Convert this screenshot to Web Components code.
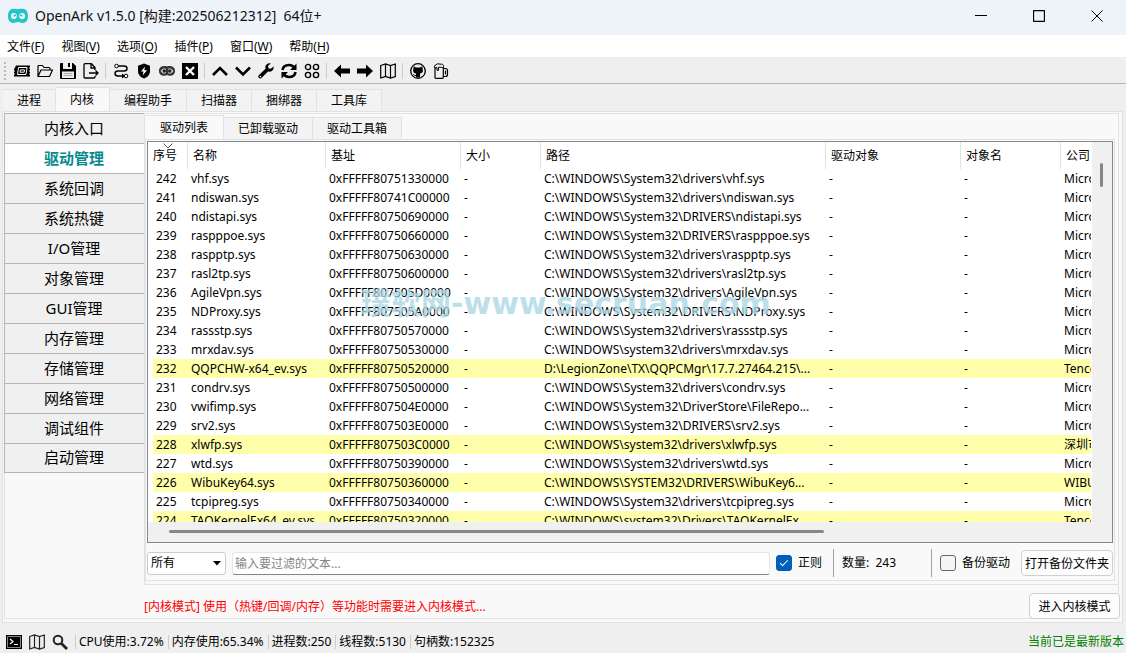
<!DOCTYPE html>
<html lang="zh-CN">
<head>
<meta charset="utf-8">
<title>OpenArk v1.5.0</title>
<style>
  html, body {
    height: 100%;
    margin: 0;
  }
  body {
    font: 12px/16px "Noto Sans", "Noto Sans CJK SC", sans-serif;
    color: #000;
    background: #efefef;
    --line: #e2e2e2;
    --pane: #f9f9f9;
    --chrome: #efefef;
    --frame: #828790;
  }
</style>
</head>
<body>
<ark-window></ark-window>

<script>
const ICONS = {
  logo: '<path fill="#22c5c8" d="M8 2.500c1.500 0 2-.5 4-.3C14.800 2.600 16 5 16 8s-1.200 5.200-4 5.600c-1.500.2-2-.8-4-.8s-2.500 1-4 .8C1.200 13.200 0 11 0 8s1.200-5.400 4-5.800c2-.2 2.500.3 4 .3z"/><ellipse cx="4.700" cy="8" rx="2.300" ry="2.400" fill="#fff"/><ellipse cx="11.300" cy="8" rx="2.300" ry="2.400" fill="#fff"/><path d="M4.700 8.200l1.500-1.200M11.300 8.200L9.800 7" stroke="#22c5c8" stroke-width="1.500"/>',
  chip: '<path fill="currentColor" d="M2 2.500h14v2h-1v1h1v2h-1v1h1v2h-1v1h1v2H0v-2h1v-1H0v-2h1v-1H0v-2h1v-1H1z"/><path d="M4.500 4.500h8.500l-1 7H3.500z" fill="none" stroke="#fff"/><path d="M6.500 6.900h4l-.4 2.300H6z" fill="none" stroke="#fff"/>',
  folder: '<path d="M1 13.500V3.500q0-1 1-1h3.500l1.500 2h5q1 0 1 1V7M1 13.500L4 7h11.500l-3 6.500z" fill="none" stroke="currentColor" stroke-width="1.200" stroke-linejoin="round"/>',
  save: '<path fill="currentColor" fill-rule="evenodd" d="M1 0h12l3 3v12q0 1-1 1H1q-1 0-1-1V1q0-1 1-1zm2 0v6h9V0h-2v4H8V0zM2 8.500V15h12V8.500z"/><path d="M3.500 10.500h9M3.500 12.500h9" stroke="#aaa"/>',
  exportFile: '<path d="M12 7V4.500L8.500.700H2q-1 0-1 1V14q0 1 1 1h9q1 0 1-1v-1M8 1v4h4M6 10h9M12.500 7.500L15 10l-2.500 2.500" fill="none" stroke="currentColor" stroke-width="1.300"/>',
  route: '<path d="M5 3h6q3 0 3 2.500T11 8H5q-3 0-3 2.500T5 13h5" fill="none" stroke="currentColor" stroke-width="1.500"/><circle cx="3.500" cy="3" r="1.800" fill="#fff" stroke="currentColor"/><path d="M9 10.500l3.500 2.500L9 15.500z" fill="currentColor"/><circle cx="13" cy="13" r="1.800" fill="#fff" stroke="currentColor"/>',
  shield: '<path fill="currentColor" d="M8 .500l6 2.300V8c0 4-3 6.500-6 7.500C5 14.500 2 12 2 8V2.800z"/><path fill="#fff" d="M9 3.500L5 8.500h2.500l-.8 4L11 7.300H8.300z"/>',
  mask: '<path fill="#333" d="M8 3.500c2-.8 8-.8 8 4.500s-6 5.300-8 4c-2 1.300-8 1.300-8-4s6-5.300 8-4.500z"/><path d="M1.500 8q3-4 5.500-2v4q-3 2-5.500-2zM14.500 8q-3-4-5.500-2v4q3 2 5.500-2z" fill="#ccc"/><circle cx="5.300" cy="8" r="1.700" fill="#222"/><circle cx="10.700" cy="8" r="1.700" fill="#222"/>',
  closeBox: '<path fill="currentColor" d="M0 0h16v16H0z"/><path d="M4 4l8 8M12 4l-8 8" stroke="#fff" stroke-width="2.400"/>',
  up: '<path d="M1 12l7-7 7 7" fill="none" stroke="currentColor" stroke-width="2.600"/>',
  down: '<path d="M1 4.500l7 7 7-7" fill="none" stroke="currentColor" stroke-width="2.600"/>',
  wrench: '<path fill="currentColor" d="M15.600 3.600l-2.900 2.200-2.300-.6-.4-2.200L12.700.400C10.500-.300 7.500 1 7.300 4l.2 1.700L.800 12.200c-1.600 1.700.8 4.300 2.700 2.800L10 8.500c3.200.8 6.200-1.500 5.600-4.900z"/><circle cx="2.500" cy="13.500" r=".8" fill="#fff"/>',
  refresh: '<path d="M1.500 7C2 3.500 5 2 8 2c2.500 0 4 1 5.500 2.800M14.500 9c-.5 3.500-3.500 5-6.500 5-2.500 0-4-1-5.500-2.800" fill="none" stroke="currentColor" stroke-width="2.600"/><path fill="currentColor" d="M15.500.500V7H9zM.500 15.500V9H7z"/>',
  grid: '<g fill="none" stroke="currentColor" stroke-width="1.400"><circle cx="4" cy="4" r="2.600"/><circle cx="12" cy="4" r="2.600"/><circle cx="4" cy="12" r="2.600"/><circle cx="12" cy="12" r="2.600"/></g>',
  left: '<path fill="currentColor" d="M0 8l7-6.500V5.500h9v5H7v4z"/>',
  right: '<path fill="currentColor" d="M16 8L9 1.500V5.500H0v5h9v4z"/>',
  map: '<path d="M.700 2.500L5.500 1l5 1.500L15.300 1v12.500L10.500 15l-5-1.500L.700 15zM5.500 1v12.500M10.500 2.500V15" fill="none" stroke="currentColor" stroke-width="1.200"/>',
  github: '<circle cx="8" cy="8" r="7.300" fill="none" stroke="currentColor" stroke-width="1.300"/><path fill="currentColor" d="M3.700 3.300l2.200 1.200h4.200l2.200-1.200.6 4.200c0 2-1.400 2.800-2.900 3.100v4H6v-4c-1.500-.3-2.900-1.100-2.900-3.100z"/><path d="M6 12.500c-1.500.3-2-.5-2.800-1.300" fill="none" stroke="currentColor"/>',
  beer: '<path d="M2 4v10.500q0 .8.800.8h6.700q.8 0 .8-.8V4M10.500 5.500h2q2 0 2 2v4q0 2-2 2h-2M12.500 7.500v4" fill="none" stroke="currentColor" stroke-width="1.200"/><path d="M2 5C.700 4 1.500 2 3 2 3.500.500 6 .500 7 1.300c1.700-.8 4 .2 3.500 2.300-.5 1-1.500 1-2.500.7H5.500v3H4V4.500z" fill="#eee" stroke="currentColor"/>',
  terminal: '<path fill="#000" d="M0 1h16v14H0z"/><path d="M1.500 2.500h13v11h-13z" fill="none" stroke="#888"/><path d="M4 5l3 2.500L4 10M8 10.500h4" fill="none" stroke="#fff" stroke-width="1.200"/>',
  search: '<circle cx="6" cy="6" r="4.300" fill="none" stroke="currentColor" stroke-width="2"/><path d="M9.200 9.200L15 15" stroke="currentColor" stroke-width="2.800"/>'
}

const TOOLS = [
  ['chip', 'folder', 'save', 'exportFile'],
  ['route', 'shield', 'mask', 'closeBox'],
  ['up', 'down', 'wrench', 'refresh', 'grid'],
  ['left', 'right', 'map'],
  ['github', 'beer']
]

const SYS = 'C:\\WINDOWS\\System32\\'
const sys = 'C:\\WINDOWS\\system32\\'
const MS = 'Microsoft'

// number, name, base, path, company, flagged
const DRIVERS = [
  [242, 'vhf.sys', '51330000', SYS + 'drivers\\vhf.sys', MS],
  [241, 'ndiswan.sys', '41C00000', SYS + 'drivers\\ndiswan.sys', MS],
  [240, 'ndistapi.sys', '50690000', SYS + 'DRIVERS\\ndistapi.sys', MS],
  [239, 'raspppoe.sys', '50660000', SYS + 'DRIVERS\\raspppoe.sys', MS],
  [238, 'raspptp.sys', '50630000', SYS + 'drivers\\raspptp.sys', MS],
  [237, 'rasl2tp.sys', '50600000', SYS + 'drivers\\rasl2tp.sys', MS],
  [236, 'AgileVpn.sys', '505D0000', SYS + 'drivers\\AgileVpn.sys', MS],
  [235, 'NDProxy.sys', '505A0000', SYS + 'DRIVERS\\NDProxy.sys', MS],
  [234, 'rassstp.sys', '50570000', SYS + 'drivers\\rassstp.sys', MS],
  [233, 'mrxdav.sys', '50530000', sys + 'drivers\\mrxdav.sys', MS],
  [232, 'QQPCHW-x64_ev.sys', '50520000', 'D:\\LegionZone\\TX\\QQPCMgr\\17.7.27464.215\\...', 'Tencent', true],
  [231, 'condrv.sys', '50500000', SYS + 'drivers\\condrv.sys', MS],
  [230, 'vwifimp.sys', '504E0000', SYS + 'DriverStore\\FileRepo...', MS],
  [229, 'srv2.sys', '503E0000', SYS + 'DRIVERS\\srv2.sys', MS],
  [228, 'xlwfp.sys', '503C0000', sys + 'drivers\\xlwfp.sys', '深圳市', true],
  [227, 'wtd.sys', '50390000', SYS + 'drivers\\wtd.sys', MS],
  [226, 'WibuKey64.sys', '50360000', 'C:\\WINDOWS\\SYSTEM32\\DRIVERS\\WibuKey6...', 'WIBU', true],
  [225, 'tcpipreg.sys', '50340000', SYS + 'drivers\\tcpipreg.sys', MS],
  [224, 'TAOKernelEx64_ev.sys', '50320000', sys + 'Drivers\\TAOKernelEx...', 'Tencent', true]
]

class ArkIcon extends HTMLElement {
  constructor() {
    super()
    this.attachShadow({ mode: 'open' })
  }

  connectedCallback() {
    this.shadowRoot.innerHTML = /* html */ `
      <style>
        :host { display: block; width: 16px; height: 16px; flex: none; }
        svg { display: block; width: 100%; height: 100%; }
      </style>
      <svg viewBox="0 0 16 16" aria-hidden="true">${ICONS[this.getAttribute('name')]}</svg>
    `
  }
}

class ArkTitlebar extends HTMLElement {
  constructor() {
    super()
    this.attachShadow({ mode: 'open' })
    this.shadowRoot.innerHTML = /* html */ `
      <style>
        :host {
          display: flex;
          align-items: center;
          height: 35px;
          box-sizing: border-box;
          padding: 0 7px 4px 8px;
          background: #eef3fa;
          font-size: 14px;
          line-height: 20px;
          color: #111;
        }
        ark-icon { width: 20px; height: 20px; margin-right: 7px; }
        .title { flex: 1; white-space: pre; }
        .buttons { display: flex; gap: 14px; }
        button {
          width: 44px;
          height: 30px;
          padding: 0;
          border: 0;
          background: none;
          display: grid;
          place-items: center;
        }
        svg { fill: none; stroke: #000; }
      </style>
      <ark-icon name="logo"></ark-icon>
      <span class="title"><slot></slot></span>
      <div class="buttons">
        <button type="button" aria-label="最小化"><svg width="12" height="12"><path d="M0 5.500h12"/></svg></button>
        <button type="button" aria-label="最大化"><svg width="12" height="12"><rect x=".5" y=".5" width="11" height="11" rx="1" stroke-width="1.300"/></svg></button>
        <button type="button" aria-label="关闭"><svg width="12" height="12"><path d="M.500.500l11 11M11.500.500l-11 11"/></svg></button>
      </div>
    `
  }
}

class ArkMenubar extends HTMLElement {
  constructor() {
    super()
    this.attachShadow({ mode: 'open' })
    const menus = [['文件', 'F'], ['视图', 'V'], ['选项', 'O'], ['插件', 'P'], ['窗口', 'W'], ['帮助', 'H']]
    this.shadowRoot.innerHTML = /* html */ `
      <style>
        :host {
          display: flex;
          gap: 3px;
          height: 22px;
          background: #fff;
          border-bottom: 1px solid #eee;
        }
        button {
          font: inherit;
          padding: 2px 7px 0;
          border: 0;
          background: none;
        }
        u { text-underline-offset: 2px; }
      </style>
      ${menus.map(([text, key]) => `<button type="button">${text}(<u>${key}</u>)</button>`).join('')}
    `
  }
}

class ArkToolbar extends HTMLElement {
  constructor() {
    super()
    this.attachShadow({ mode: 'open' })
    this.shadowRoot.innerHTML = /* html */ `
      <style>
        :host {
          display: flex;
          align-items: center;
          height: 25px;
          padding-left: 4px;
          background: var(--chrome);
          border-bottom: 1px solid #b4b4b4;
        }
        .grip {
          width: 2px;
          height: 18px;
          margin-right: 4px;
          background: repeating-linear-gradient(#bbb 0 2px, transparent 2px 4px);
        }
        .group { display: flex; }
        .group + .group::before {
          content: "";
          width: 1px;
          height: 16px;
          margin: 0 3px;
          background: #ccc;
        }
        button {
          width: 23px;
          height: 16px;
          padding: 0 3px 0 4px;
          border: 0;
          background: none;
          color: #000;
        }
      </style>
      <span class="grip"></span>
      ${TOOLS.map(group => `
        <div class="group">
          ${group.map(name => `<button type="button" aria-label="${name}"><ark-icon name="${name}"></ark-icon></button>`).join('')}
        </div>`).join('')}
    `
  }
}

// tab strip with the page of the selected tab slotted below it
class ArkTabs extends HTMLElement {
  constructor() {
    super()
    this.attachShadow({ mode: 'open' })
  }

  connectedCallback() {
    const labels = this.getAttribute('labels').split(',')
    const selected = Number(this.getAttribute('selected'))
    this.shadowRoot.innerHTML = /* html */ `
      <style>
        :host {
          display: flex;
          flex-direction: column;
          min-width: 0;
          min-height: 0;
        }
        .strip {
          display: flex;
          align-items: flex-end;
          height: 24px;
          padding-left: 1px;
        }
        button {
          font: inherit;
          height: 22px;
          padding: 0 14px;
          border: solid var(--line);
          border-width: 1px 1px 0 0;
          background: #f3f3f3;
        }
        button[aria-selected="true"] {
          height: 25px;
          padding: 0 15px 1px 14px;
          margin-bottom: -1px;
          background: var(--pane);
        }
        .page {
          flex: 1;
          display: flex;
          flex-direction: column;
          min-height: 0;
          border: 1px solid var(--line);
          padding: var(--page-padding, 1px);
          background: var(--pane);
        }
      </style>
      <div class="strip" role="tablist">
        ${labels.map((label, i) => `<button type="button" role="tab" aria-selected="${i === selected}">${label}</button>`).join('')}
      </div>
      <div class="page"><slot></slot></div>
    `
  }
}

class ArkSidebar extends HTMLElement {
  constructor() {
    super()
    this.attachShadow({ mode: 'open' })
    const items = ['内核入口', '驱动管理', '系统回调', '系统热键', 'I/O管理', '对象管理', 'GUI管理', '内存管理', '存储管理', '网络管理', '调试组件', '启动管理']
    this.shadowRoot.innerHTML = /* html */ `
      <style>
        :host {
          display: flex;
          flex-direction: column;
          width: 140px;
          flex: none;
          font-size: 15px;
          line-height: 20px;
        }
        button {
          font: inherit;
          height: 30px;
          padding: 0 1px 2px 0;
          border: solid #b4b4b4;
          border-width: 1px 0 0 1px;
          background: #f0f0f0;
        }
        button:last-child { border-bottom-width: 1px; }
        .current {
          background: #fff;
          color: #088a8f;
          font-weight: bold;
        }
      </style>
      ${items.map(item => `<button type="button"${item === '驱动管理' ? ' class="current"' : ''}>${item}</button>`).join('')}
    `
  }
}

class DriverTable extends HTMLElement {
  constructor() {
    super()
    this.attachShadow({ mode: 'open' })
    this.shadowRoot.innerHTML = /* html */ `
      <style>
        :host {
          display: grid;
          grid-template: minmax(0, 1fr) 20px / minmax(0, 1fr) 20px;
          flex: 1;
          min-height: 0;
          border: 1px solid var(--frame);
          background: #f0f0f0;
        }
        .view {
          overflow: hidden;
          padding: 0 1px 0 5px;
          background: #fff;
        }
        table {
          width: 100%;
          table-layout: fixed;
          border-collapse: separate;
          border-spacing: 0;
        }
        th, td {
          padding: 0 0 0 4px;
          overflow: hidden;
          white-space: nowrap;
          text-align: left;
          font-weight: normal;
        }
        th {
          height: 27px;
          padding-left: 5px;
          border-left: 1px solid var(--line);
        }
        th:first-child {
          position: relative;
          padding: 0;
          border: 0;
        }
        .sort {
          position: absolute;
          top: 1px;
          left: 10px;
          fill: none;
          stroke: #555;
        }
        td { height: 19px; line-height: 19px; }
        td:first-child { padding-left: 3px; }
        td:nth-child(5) { text-overflow: ellipsis; }
        .flagged { background: #ffffab; }
        .vertical { padding: 21px 9px 0 8px; }
        .horizontal { padding: 8px 0 0 21px; }
        .thumb { background: #868686; border-radius: 2px; }
        .vertical .thumb { height: 24px; }
        .horizontal .thumb { width: 71%; height: 3px; }
      </style>
      <div class="view">
        <table>
          <colgroup>
            <col style="width: 34px"><col style="width: 138px"><col style="width: 135px"><col style="width: 80px">
            <col style="width: 285px"><col style="width: 135px"><col style="width: 100px"><col>
          </colgroup>
          <thead>
            <tr>
              <th><svg class="sort" width="10" height="6"><path d="M.500.500l4.500 4.500L9.500.500"/></svg>序号</th>
              <th>名称</th><th>基址</th><th>大小</th><th>路径</th><th>驱动对象</th><th>对象名</th><th>公司</th>
            </tr>
          </thead>
          <tbody>
            ${DRIVERS.map(([no, name, base, path, company, flagged]) => `
              <tr${flagged ? ' class="flagged"' : ''}>
                <td>${no}</td><td>${name}</td><td>0xFFFFF807${base}</td><td>-</td>
                <td>${path}</td><td>-</td><td>-</td><td>${company}</td>
              </tr>`).join('')}
          </tbody>
        </table>
      </div>
      <div class="vertical"><div class="thumb"></div></div>
      <div class="horizontal"><div class="thumb"></div></div>
    `
  }
}

class ArkButton extends HTMLElement {
  constructor() {
    super()
    this.attachShadow({ mode: 'open' })
    this.shadowRoot.innerHTML = /* html */ `
      <style>
        :host { display: block; flex: none; }
        button {
          font: inherit;
          display: block;
          width: 100%;
          height: 26px;
          padding: 1px 0 0;
          border: 1px solid #d0d0d0;
          border-radius: 4px;
          background: #fdfdfd;
        }
      </style>
      <button type="button"><slot></slot></button>
    `
  }
}

class FilterBar extends HTMLElement {
  constructor() {
    super()
    this.attachShadow({ mode: 'open' })
    this.shadowRoot.innerHTML = /* html */ `
      <style>
        :host {
          display: flex;
          align-items: center;
          height: 36px;
          padding-top: 4px;
          box-sizing: border-box;
        }
        .combo {
          display: grid;
          width: 79px;
          margin-right: 6px;
        }
        .combo > * { grid-area: 1 / 1; }
        .combo svg {
          align-self: center;
          justify-self: end;
          margin-right: 5px;
          pointer-events: none;
        }
        select, .text {
          font: inherit;
          height: 23px;
          box-sizing: border-box;
          background: #fff;
        }
        select {
          appearance: none;
          padding: 0 3px;
          border: 1px solid #ccc;
          border-radius: 3px;
          color: #000;
        }
        .text {
          flex: 1;
          min-width: 0;
          padding: 0 2px;
          border: 1px solid #e6e6e6;
          border-bottom-color: #868686;
          border-radius: 3px;
        }
        .text::placeholder { color: #868686; }
        label {
          display: flex;
          align-items: center;
          gap: 6px;
        }
        input[type="checkbox"] {
          appearance: none;
          display: grid;
          place-items: center;
          width: 16px;
          height: 16px;
          box-sizing: border-box;
          margin: 0;
          border: 1px solid #666;
          border-radius: 3px;
          background: #f5f5f5;
        }
        input[type="checkbox"]:checked {
          border-color: #005fb8;
          background: #005fb8;
        }
        input[type="checkbox"]:checked::before {
          content: "";
          width: 7px;
          height: 3px;
          border: solid #fff;
          border-width: 0 0 1px 1px;
          transform: translateY(-1px) rotate(-45deg);
        }
        .regex { margin: 0 11px 0 6px; }
        .count, .backup {
          height: 28px;
          border-left: 1px solid #a0a0a0;
          padding-left: 8px;
        }
        .count {
          width: 89px;
          line-height: 28px;
          white-space: pre;
        }
        .backup { margin-right: 11px; }
        ark-button { width: 92px; }
      </style>
      <div class="combo">
        <select aria-label="类型"><option>所有</option></select>
        <svg width="8" height="5"><path d="M0 0h8L4 4.500z"/></svg>
      </div>
      <input class="text" type="text" aria-label="过滤" placeholder="输入要过滤的文本...">
      <label class="regex"><input type="checkbox" checked>正则</label>
      <div class="count">数量:  243</div>
      <label class="backup"><input type="checkbox">备份驱动</label>
      <ark-button>打开备份文件夹</ark-button>
    `
  }
}

class StatusBar extends HTMLElement {
  constructor() {
    super()
    this.attachShadow({ mode: 'open' })
    const stats = ['CPU使用:3.72%', '内存使用:65.34%', '进程数:250', '线程数:5130', '句柄数:152325']
    this.shadowRoot.innerHTML = /* html */ `
      <style>
        :host {
          display: flex;
          align-items: center;
          height: 24px;
          box-sizing: border-box;
          padding: 2px 2px 0 6px;
        }
        .icons {
          display: flex;
          gap: 7px;
          margin-right: 7px;
          color: #222;
        }
        .stat {
          padding: 0 4px 0 3px;
          border-left: 1px solid #ccc;
          line-height: 14px;
        }
        .version { margin-left: auto; color: #008000; }
      </style>
      <div class="icons">
        <ark-icon name="terminal"></ark-icon>
        <ark-icon name="map"></ark-icon>
        <ark-icon name="search"></ark-icon>
      </div>
      ${stats.map(stat => `<span class="stat">${stat}</span>`).join('')}
      <span class="version">当前已是最新版本</span>
    `
  }
}

class ArkWindow extends HTMLElement {
  constructor() {
    super()
    this.attachShadow({ mode: 'open' })
    this.shadowRoot.innerHTML = /* html */ `
      <style>
        :host {
          display: flex;
          flex-direction: column;
          height: 100vh;
          position: relative;
          overflow: hidden;
        }
        .main {
          flex: 1;
          padding: 3px 3px 6px 2px;
          --page-padding: 1px 3px 3px 1px;
        }
        .kernel {
          flex: 1;
          display: flex;
          flex-direction: column;
          min-height: 0;
          border: 1px solid var(--line);
        }
        .split {
          flex: 1;
          display: flex;
          min-height: 0;
          margin: -1px 0 0 -1px;
        }
        .content {
          flex: 1;
          display: flex;
          min-width: 0;
          border: 1px solid var(--line);
          border-right: 0;
          padding: 1px 3px 3px 0;
        }
        .content ark-tabs {
          flex: 1;
          --page-padding: 1px;
        }
        .mode {
          display: flex;
          align-items: center;
          justify-content: space-between;
          padding-top: 8px;
          margin: 0 -2px -1px 139px;
          color: #f00;
        }
        .mode span { padding-top: 2px; }
        .mode ark-button { width: 91px; }
        .watermark {
          position: absolute;
          top: 286px;
          left: 361px;
          font: bold 30px/36px "DejaVu Sans", "Noto Sans CJK SC", sans-serif;
          color: #add8e6;
          opacity: 0.8;
          pointer-events: none;
        }
      </style>
      <ark-titlebar>OpenArk v1.5.0 [构建:202506212312]  64位+</ark-titlebar>
      <ark-menubar></ark-menubar>
      <ark-toolbar></ark-toolbar>
      <ark-tabs class="main" labels="进程,内核,编程助手,扫描器,捆绑器,工具库" selected="1">
        <div class="kernel">
          <div class="split">
            <ark-sidebar></ark-sidebar>
            <div class="content">
              <ark-tabs labels="驱动列表,已卸载驱动,驱动工具箱" selected="0">
                <driver-table></driver-table>
                <filter-bar></filter-bar>
              </ark-tabs>
            </div>
          </div>
          <div class="mode">
            <span>[内核模式] 使用（热键/回调/内存）等功能时需要进入内核模式...</span>
            <ark-button>进入内核模式</ark-button>
          </div>
        </div>
      </ark-tabs>
      <status-bar></status-bar>
      <div class="watermark">璞软网-www.secruan.com</div>
    `
  }
}

customElements.define('ark-icon', ArkIcon)
customElements.define('ark-button', ArkButton)
customElements.define('ark-titlebar', ArkTitlebar)
customElements.define('ark-menubar', ArkMenubar)
customElements.define('ark-toolbar', ArkToolbar)
customElements.define('ark-tabs', ArkTabs)
customElements.define('ark-sidebar', ArkSidebar)
customElements.define('driver-table', DriverTable)
customElements.define('filter-bar', FilterBar)
customElements.define('status-bar', StatusBar)
customElements.define('ark-window', ArkWindow)
</script>
</body>
</html>
